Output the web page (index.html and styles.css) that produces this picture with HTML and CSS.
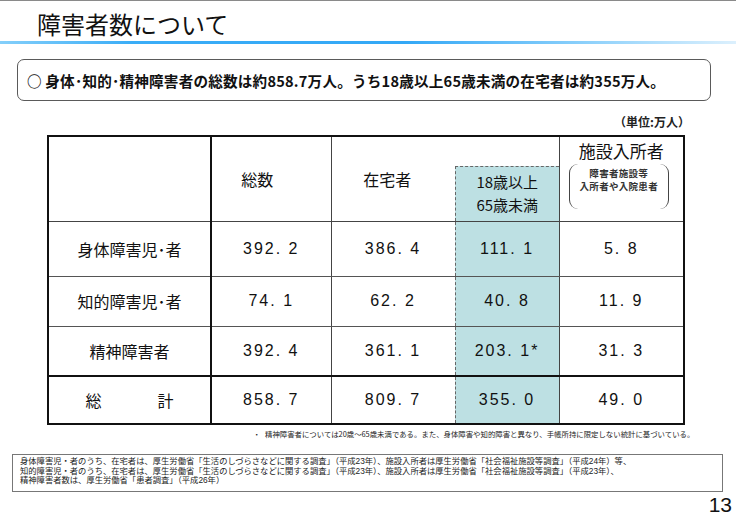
FILE: index.html
```html
<!DOCTYPE html>
<html lang="ja">
<head>
<meta charset="utf-8">
<link rel="stylesheet" href="styles.css">
</head>
<body>
<div class="slide">
  <div class="topline"></div>
  <header class="title"><h1>障害者数について</h1></header>
  <div class="bar"></div>
  <div class="summary">○ 身体･知的･精神障害者の総数は約858.7万人。うち18歳以上65歳未満の在宅者は約355万人。</div>
  <div class="unit">（単位:万人）</div>
  <table class="data">
    <colgroup>
      <col class="c1"><col class="c2"><col class="c3"><col class="c4"><col class="c5">
    </colgroup>
    <thead>
      <tr class="hrow">
        <th class="lbl"></th>
        <th class="h-total">総数</th>
        <th class="h-home">在宅者</th>
        <th class="h-hl"><div class="hlbox">18歳以上<br>65歳未満</div></th>
        <th class="h-fac">
          <div class="fac-title">施設入所者</div>
          <div class="bracket">障害者施設等<br>入所者や入院患者</div>
        </th>
      </tr>
    </thead>
    <tbody>
      <tr class="r1">
        <td class="lbl">身体障害児･者</td>
        <td class="num">392. 2</td>
        <td class="num home">386. 4</td>
        <td class="num hl">111. 1</td>
        <td class="num">5. 8</td>
      </tr>
      <tr class="r">
        <td class="lbl">知的障害児･者</td>
        <td class="num">74. 1</td>
        <td class="num home">62. 2</td>
        <td class="num hl">40. 8</td>
        <td class="num">11. 9</td>
      </tr>
      <tr class="r">
        <td class="lbl">精神障害者</td>
        <td class="num">392. 4</td>
        <td class="num home">361. 1</td>
        <td class="num hl">203. 1*</td>
        <td class="num">31. 3</td>
      </tr>
      <tr class="total">
        <td class="lbl"><span class="spread"><span>総</span><span>計</span></span></td>
        <td class="num">858. 7</td>
        <td class="num home">809. 7</td>
        <td class="num hl">355. 0</td>
        <td class="num">49. 0</td>
      </tr>
    </tbody>
  </table>
  <p class="note"><span class="dot">・</span>精神障害者については20歳～65歳未満である。また、身体障害や知的障害と異なり、手帳所持に限定しない統計に基づいている。</p>
  <div class="source">
    <div class="sline">身体障害児・者のうち、在宅者は、厚生労働省「生活のしづらさなどに関する調査」（平成23年）、施設入所者は厚生労働省「社会福祉施設等調査」（平成24年）等、</div>
    <div class="sline">知的障害児・者のうち、在宅者は、厚生労働省「生活のしづらさなどに関する調査」（平成23年）、施設入所者は厚生労働省「社会福祉施設等調査」（平成23年）、</div>
    <div class="sline">精神障害者数は、厚生労働省「患者調査」（平成26年）</div>
  </div>
  <div class="page">13</div>
</div>
</body>
</html>
```

FILE: styles.css
```css
html, body {
  margin: 0;
  padding: 0;
  background: #fff;
}
body {
  font-family: "Noto Sans CJK JP", "Noto Sans", sans-serif;
  color: #1a1a1a;
}
.slide {
  width: 736px;
  height: 522px;
  overflow: hidden;
  display: flex;
  flex-direction: column;
}
.topline {
  height: 1px;
  background: #8a8a8a;
}
.title {
  height: 40px;
}
.title h1 {
  margin: 0;
  padding: 6px 0 0 37px;
  font-size: 24px;
  font-weight: normal;
  line-height: 34px;
  color: #111;
}
.bar {
  height: 3px;
  background: linear-gradient(to right, #84cffa 0%, #3aadf7 18%, #33a8f6 55%, #8ed1fb 80%, #dcf0fd 100%);
}
.summary {
  margin: 15px 0 0 17px;
  width: 694px;
  height: 42px;
  box-sizing: border-box;
  border: 1.5px solid #5a5a5a;
  border-radius: 7px;
  display: flex;
  align-items: center;
  padding-left: 9px;
  font-size: 14.6px;
  letter-spacing: 0.2px;
  font-weight: bold;
  white-space: nowrap;
  color: #111;
}
.unit {
  margin-top: 14px;
  padding-right: 46px;
  text-align: right;
  font-size: 12px;
  line-height: 14px;
  font-weight: bold;
  color: #222;
}
.data {
  margin: 6px 0 0 47px;
  width: 636px;
  border-collapse: collapse;
  border: 2px solid #111;
  table-layout: fixed;
}
.c1 { width: 163px; }
.c2 { width: 120px; }
.c3 { width: 124px; }
.c4 { width: 104px; }
.c5 { width: 125px; }
.data th, .data td {
  border: 1px solid #444;
  padding: 0;
  text-align: center;
  vertical-align: middle;
}
.data tr.hrow { height: 85px; }
.data tr.r1 { height: 55px; }
.data tr.r { height: 50px; }
.data tr.total { height: 48px; }
.data th {
  font-weight: normal;
  font-size: 16px;
  color: #111;
}
.data th.lbl, .data td.lbl {
  border-right: 2px solid #111;
}
.data th.h-total {
  padding-right: 28px;
}
.data th.h-home {
  border-right: none;
  padding-right: 12px;
}
.data th.h-hl {
  border-left: none;
  vertical-align: bottom;
}
.hlbox {
  height: 55px;
  box-sizing: border-box;
  background: #bde0e3;
  border-top: 1px dashed #666;
  border-left: 1px dashed #666;
  font-size: 15px;
  line-height: 23px;
  padding-top: 3px;
}
.data th.h-fac {
  vertical-align: top;
  padding-top: 2px;
}
.fac-title {
  font-size: 17px;
  line-height: 24px;
}
.bracket {
  margin: 1px 14px 0 9px;
  height: 45px;
  box-sizing: border-box;
  border-left: 1px solid #444;
  border-right: 1px solid #444;
  border-radius: 9px;
  font-size: 9.5px;
  font-weight: bold;
  line-height: 13px;
  padding-top: 3px;
  color: #333;
  letter-spacing: 0.3px;
}
.data td {
  border-top: 1.5px solid #555;
  border-bottom: 1.5px solid #555;
  font-size: 16px;
  color: #111;
}
.data td.num {
  font-family: "Liberation Sans", Arial, sans-serif;
  letter-spacing: 2px;
}
.data td.home {
  border-right: 1px dashed #666;
}
.data td.hl {
  background: #bde0e3;
  border-left: 1px dashed #666;
}
.data tr.total td {
  border-top: 2px solid #111;
}
.spread {
  display: inline-flex;
  justify-content: space-between;
  width: 88px;
}
.note {
  margin: 4px 0 0 253px;
  font-size: 7.4px;
  line-height: 10px;
  color: #222;
  white-space: nowrap;
}
.note .dot {
  display: inline-block;
  width: 12px;
}
.source {
  margin: 15px 0 0 12px;
  width: 711px;
  height: 38px;
  box-sizing: border-box;
  border: 1.5px solid #777;
  padding: 2px 0 0 7px;
  font-family: "Liberation Sans", "Noto Sans CJK JP", sans-serif;
  font-size: 8.3px;
  line-height: 9.5px;
  color: #222;
  white-space: nowrap;
}
.sline {
  height: 9.5px;
}
.page {
  margin-top: 2px;
  padding-right: 4px;
  text-align: right;
  font-family: "Liberation Sans", Arial, sans-serif;
  font-size: 21px;
  line-height: 21px;
  color: #111;
}
```
